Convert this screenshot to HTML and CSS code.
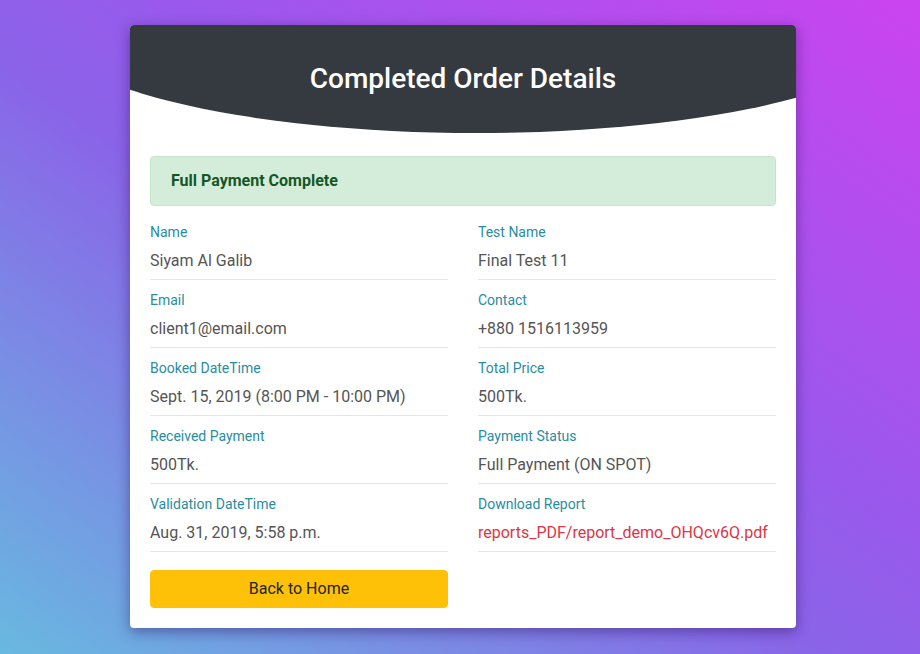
FILE: index.html
```html
<!DOCTYPE html>
<html>
<head>
<meta charset="utf-8">
<link rel="stylesheet" href="styles.css">
</head>
<body>
<div class="page">
  <div class="card">
    <div class="card-header">
      <h3 class="title">Completed Order Details</h3>
    </div>
    <div class="card-body">
      <div class="alert">Full Payment Complete</div>
      <div class="grid">
        <div class="item"><div class="label">Name</div><div class="value">Siyam Al Galib</div></div>
        <div class="item"><div class="label">Test Name</div><div class="value">Final Test 11</div></div>
        <div class="item"><div class="label">Email</div><div class="value">client1@email.com</div></div>
        <div class="item"><div class="label">Contact</div><div class="value">+880 1516113959</div></div>
        <div class="item"><div class="label">Booked DateTime</div><div class="value">Sept. 15, 2019 (8:00 PM - 10:00 PM)</div></div>
        <div class="item"><div class="label">Total Price</div><div class="value">500Tk.</div></div>
        <div class="item"><div class="label">Received Payment</div><div class="value">500Tk.</div></div>
        <div class="item"><div class="label">Payment Status</div><div class="value">Full Payment (ON SPOT)</div></div>
        <div class="item"><div class="label">Validation DateTime</div><div class="value">Aug. 31, 2019, 5:58 p.m.</div></div>
        <div class="item"><div class="label">Download Report</div><div class="value link">reports_PDF/report_demo_OHQcv6Q.pdf</div></div>
        <div class="btn-cell"><button class="btn">Back to Home</button></div>
      </div>
    </div>
  </div>
</div>
</body>
</html>
```

FILE: styles.css
```css
html, body {
  margin: 0;
  padding: 0;
  height: 100%;
}
body {
  font-family: Roboto, "Liberation Sans", sans-serif;
  background: linear-gradient(to top right, #68b9e0 0%, #8a64e8 45%, #9a58ec 60%, #cb44ef 100%);
  background-attachment: fixed;
}
.page {
  padding-top: 25px;
  padding-left: 6px;
  display: flex;
  justify-content: center;
}
.card {
  width: 666px;
  background: #fff;
  border-radius: 4px;
  overflow: hidden;
  box-shadow: 0 4px 14px rgba(40, 10, 90, 0.45);
}
.card-header {
  height: 108px;
  background: #343a40;
  clip-path: ellipse(433px 108px at 52% 0);
  box-sizing: border-box;
  padding-top: 37px;
}
.title {
  margin: 0;
  text-align: center;
  color: #fff;
  font-size: 28px;
  font-weight: 500;
  line-height: 1.2;
}
.card-body {
  padding: 23px 20px 20px;
}
.alert {
  background: #d4edda;
  border: 1px solid #c3e6cb;
  border-radius: 4px;
  color: #155724;
  font-weight: 700;
  font-size: 16px;
  line-height: 24px;
  padding: 12px 20px;
  margin-bottom: 6px;
}
.grid {
  display: grid;
  grid-template-columns: 1fr 1fr;
  column-gap: 30px;
}
.item {
  padding: 10px 0 6px;
  border-bottom: 1px solid #e5e5e5;
}
.label {
  color: #2a8d9e;
  font-size: 14px;
  line-height: 21px;
  margin-bottom: 6px;
}
.value {
  color: #555;
  font-size: 16px;
  line-height: 24px;
  white-space: nowrap;
}
.value.link {
  color: #dc3545;
}
.btn-cell {
  padding-top: 18px;
}
.btn {
  width: 100%;
  height: 38px;
  background: #ffc107;
  border: 1px solid #ffc107;
  border-radius: 4px;
  color: #212529;
  font-family: Roboto, "Liberation Sans", sans-serif;
  font-size: 16px;
  line-height: 24px;
  cursor: pointer;
}
```
